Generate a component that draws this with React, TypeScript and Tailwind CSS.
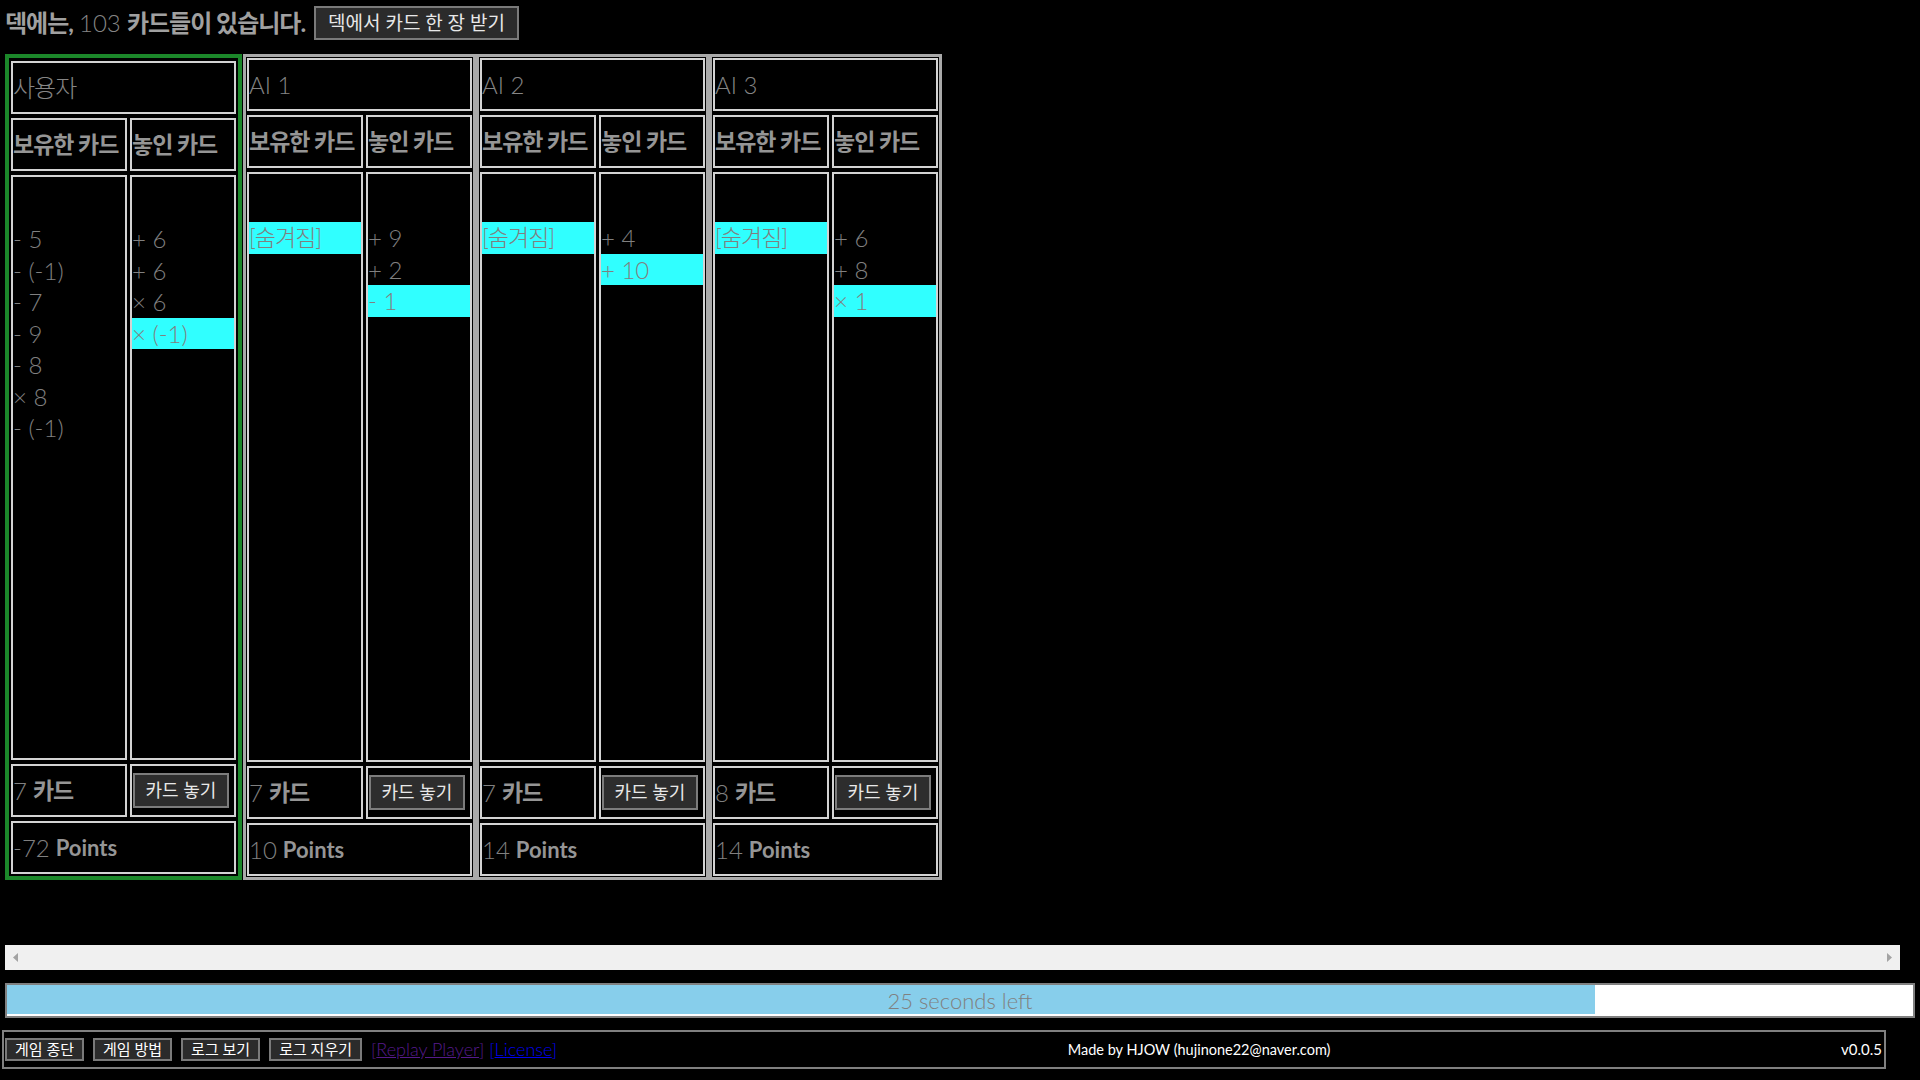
import type { ReactNode } from "react"

type Card = { text: string; hl?: boolean }
type Player = {
  name: ReactNode
  user?: boolean
  held: Card[]
  placed: Card[]
  count: number
  points: number
}

const Ko = ({ children }: { children: ReactNode }) => <span className="tracking-[-1px]">{children}</span>

const players: Player[] = [
  {
    name: <Ko>사용자</Ko>,
    user: true,
    held: [
      { text: "- 5" },
      { text: "- (-1)" },
      { text: "- 7" },
      { text: "- 9" },
      { text: "- 8" },
      { text: "× 8" },
      { text: "- (-1)" },
    ],
    placed: [{ text: "+ 6" }, { text: "+ 6" }, { text: "× 6" }, { text: "× (-1)", hl: true }],
    count: 7,
    points: -72,
  },
  {
    name: "AI 1",
    held: [{ text: "[숨겨짐]", hl: true }],
    placed: [{ text: "+ 9" }, { text: "+ 2" }, { text: "- 1", hl: true }],
    count: 7,
    points: 10,
  },
  {
    name: "AI 2",
    held: [{ text: "[숨겨짐]", hl: true }],
    placed: [{ text: "+ 4" }, { text: "+ 10", hl: true }],
    count: 7,
    points: 14,
  },
  {
    name: "AI 3",
    held: [{ text: "[숨겨짐]", hl: true }],
    placed: [{ text: "+ 6" }, { text: "+ 8" }, { text: "× 1", hl: true }],
    count: 8,
    points: 14,
  },
]

function CardList({ cards, top }: { cards: Card[]; top: string }) {
  return (
    <div className={`flex flex-col ${top}`}>
      {cards.map((c, i) => (
        <div
          key={i}
          className={`h-[31.5px] leading-[31.5px] whitespace-nowrap font-light text-[#808080] ${
            c.hl ? "bg-[#30ffff]" : ""
          } ${/[가-힣]/.test(c.text) ? "text-[23px]" : "text-[24px]"}`}
        >
          {/[가-힣]/.test(c.text) ? <Ko>{c.text}</Ko> : c.text}
        </div>
      ))}
    </div>
  )
}

function Panel({ p, first }: { p: Player; first?: boolean }) {
  const outer = p.user
    ? "w-[237px] border-4 border-[#1c872a] px-[2px] pt-[3px] pb-[2px]"
    : `w-[233px] border-[3px] border-[#a9a9a9] p-[1px] ${first ? "ml-[1px]" : ""}`
  const cell = "border-2 border-[#d3d3d3]"
  return (
    <div className={`flex flex-col gap-[4px] ${outer}`}>
      <div className={`${cell} h-[53px] flex items-center text-[24px] font-light text-[#858585] whitespace-nowrap`}>
        {p.name}
      </div>
      <div className="flex gap-[3px] h-[53px] text-[23px] font-bold text-[#959595] whitespace-nowrap">
        <div className={`${cell} w-[116px] flex items-center overflow-hidden`}>
          <Ko>보유한 카드</Ko>
        </div>
        <div className={`${cell} flex-1 flex items-center overflow-hidden`}>
          <Ko>놓인 카드</Ko>
        </div>
      </div>
      <div className="flex gap-[3px] flex-1 min-h-0">
        <div className={`${cell} w-[116px]`}>
          <CardList cards={p.held} top={p.user ? "pt-[46px]" : "pt-[48px]"} />
        </div>
        <div className={`${cell} flex-1`}>
          <CardList cards={p.placed} top={p.user ? "pt-[46px]" : "pt-[48px]"} />
        </div>
      </div>
      <div className="flex gap-[3px] h-[53px]">
        <div className={`${cell} w-[116px] flex items-center whitespace-nowrap`}>
          <span className="text-[24px] font-light text-[#808080]">{p.count}</span>
          <span className="ml-[6px] text-[23px] font-bold text-[#959595]">
            <Ko>카드</Ko>
          </span>
        </div>
        <div className={`${cell} flex-1 flex items-center pl-[1px]`}>
          <button className="w-[96px] h-[35px] border-2 border-[#7c7c7c] bg-[#2d2d2d] text-[18px] text-[#e8e8e8] flex items-center justify-center whitespace-nowrap">
            카드 놓기
          </button>
        </div>
      </div>
      <div className={`${cell} h-[53px] flex items-center whitespace-nowrap`}>
        <span className="text-[24px] font-light text-[#808080]">{p.points}</span>
        <span className="ml-[6px] text-[22px] font-bold text-[#959595]">Points</span>
      </div>
    </div>
  )
}

export default function App() {
  const buttons = ["게임 종단", "게임 방법", "로그 보기", "로그 지우기"]
  return (
    <div className="w-[1920px] h-[1080px] overflow-hidden bg-black font-['Lato','Noto_Sans_CJK_KR',sans-serif]">
      <div className="flex items-center h-[34px] mt-[6px] ml-[5px]">
        <div className="text-[24px] whitespace-nowrap">
          <span className="font-bold text-[#a0a0a0]">
            <Ko>덱에는,</Ko>
          </span>{" "}
          <span className="font-light text-[#858585]">103</span>{" "}
          <span className="font-bold text-[#a0a0a0]">
            <Ko>카드들이 있습니다.</Ko>
          </span>
        </div>
        <button className="ml-[9px] h-[34px] px-[12px] border-2 border-[#7a7a7a] bg-[#2b2b2b] text-[19px] text-[#e8e8e8] whitespace-nowrap">
          덱에서 카드 한 장 받기
        </button>
      </div>

      <div className="flex ml-[5px] mt-[14px] h-[826px]">
        {players.map((p, i) => (
          <Panel key={i} p={p} first={i === 1} />
        ))}
      </div>

      <div className="ml-[5px] mt-[65px] w-[1895px] h-[25px] bg-[#f0f0f0] flex items-center justify-between px-[8px]">
        <svg width="6" height="9" viewBox="0 0 6 9">
          <path d="M5 0 L0 4.5 L5 9 Z" fill="#a3a3a3" />
        </svg>
        <svg width="6" height="9" viewBox="0 0 6 9">
          <path d="M1 0 L6 4.5 L1 9 Z" fill="#a3a3a3" />
        </svg>
      </div>

      <div className="relative ml-[5px] mt-[13px] w-[1910px] h-[35px] border-2 border-[#808080] bg-white">
        <div className="h-[29px] bg-[#87ceeb]" style={{ width: `${(25 / 30) * 100}%` }} />
        <div className="absolute inset-0 flex items-center justify-center text-[22px] font-light text-[#808080]">
          25 seconds left
        </div>
      </div>

      <div className="ml-[2px] mt-[12px] w-[1884px] h-[39px] border-2 border-[#808080] flex items-center justify-between pl-[1px] pr-[2px]">
        <div className="flex items-center gap-[9px]">
          {buttons.map((b) => (
            <button
              key={b}
              className="h-[23px] px-[8px] border-2 border-[#7a7a7a] bg-[#2b2b2b] text-[15px] leading-none text-white whitespace-nowrap"
            >
              {b}
            </button>
          ))}
          <div className="text-[18px] font-light whitespace-nowrap">
            <span className="text-[#551a8b]">
              [<span className="underline">Replay Player</span>]
            </span>{" "}
            <span className="text-[#0000ee]">
              [<span className="underline">License</span>]
            </span>
          </div>
        </div>
        <div className="text-[14.5px] text-white whitespace-nowrap">Made by HJOW (hujinone22@naver.com)</div>
        <div className="text-[15px] text-white">v0.0.5</div>
      </div>
    </div>
  )
}
